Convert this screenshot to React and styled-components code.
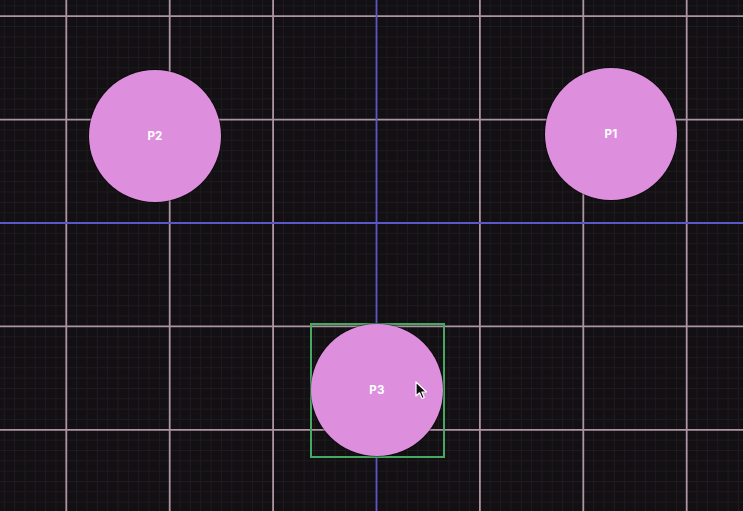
import React from "react";
import styled, { createGlobalStyle } from "styled-components";

const GlobalStyle = createGlobalStyle`
  html, body {
    margin: 0;
    padding: 0;
    background: #121012;
    overflow: hidden;
  }
  body {
    font-family: Inter, "Liberation Sans", sans-serif;
  }
`;

// canvas geometry
const ORIGIN_X = 376.5;
const ORIGIN_Y = 223;
const STEP = 103.4;
const RADIUS = 66;

const Canvas = styled.div`
  position: relative;
  width: 743px;
  height: 511px;
  overflow: hidden;
  background: #121012;
`;

const GridLayer = styled.svg`
  position: absolute;
  inset: 0;
`;

const Node = styled.div`
  position: absolute;
  left: ${(p) => p.$x - RADIUS}px;
  top: ${(p) => p.$y - RADIUS}px;
  width: ${RADIUS * 2}px;
  height: ${RADIUS * 2}px;
  border-radius: 50%;
  background: #dd8fde;
  display: flex;
  align-items: center;
  justify-content: center;
  color: #fff;
  font-size: 11.5px;
  font-weight: 700;
  letter-spacing: 0.2px;
  box-shadow: 0 0 0 1px rgba(0, 0, 0, 0.35);
`;

const Selection = styled.div`
  position: absolute;
  left: ${(p) => p.$x - RADIUS - 1.5}px;
  top: ${(p) => p.$y - RADIUS - 1.5}px;
  width: ${RADIUS * 2 + 3}px;
  height: ${RADIUS * 2 + 3}px;
  border: 2px solid #47a862;
  box-sizing: border-box;
`;

const Cursor = styled.svg`
  position: absolute;
  left: 415px;
  top: 381px;
  width: 13px;
  height: 19px;
`;

const nodes = [
  { id: "P2", x: 155, y: 136 },
  { id: "P1", x: 611, y: 134 },
  { id: "P3", x: 377, y: 390, selected: true },
];

function Grid() {
  const minor = [];
  const major = [];
  const minorStep = STEP / 10;
  for (let i = -40; i <= 40; i++) {
    const x = ORIGIN_X + i * minorStep;
    if (x < -1 || x > 744) continue;
    if (i % 10 === 0) major.push({ type: "v", pos: x, axis: i === 0 });
    else minor.push({ type: "v", pos: x });
  }
  for (let i = -30; i <= 30; i++) {
    const y = ORIGIN_Y + i * minorStep;
    if (y < -1 || y > 512) continue;
    if (i % 10 === 0) major.push({ type: "h", pos: y, axis: i === 0 });
    else minor.push({ type: "h", pos: y });
  }
  const line = (l, stroke, w, k) =>
    l.type === "v" ? (
      <line key={k} x1={l.pos} x2={l.pos} y1={0} y2={511} stroke={stroke} strokeWidth={w} />
    ) : (
      <line key={k} x1={0} x2={743} y1={l.pos} y2={l.pos} stroke={stroke} strokeWidth={w} />
    );
  return (
    <GridLayer width="743" height="511" viewBox="0 0 743 511">
      {minor.map((l, i) => line(l, "#201b20", 1, "m" + i))}
      {major
        .filter((l) => !l.axis)
        .map((l, i) => line(l, "#ad94a4", 1.8, "M" + i))}
      {major
        .filter((l) => l.axis)
        .map((l, i) => line(l, "#5b57c9", 1.8, "A" + i))}
    </GridLayer>
  );
}

export default function App() {
  return (
    <>
      <GlobalStyle />
      <Canvas>
        <Grid />
        {nodes.map((n) => (
          <React.Fragment key={n.id}>
            {n.selected && <Selection $x={n.x} $y={n.y} />}
            <Node $x={n.x} $y={n.y}>
              {n.id}
            </Node>
          </React.Fragment>
        ))}
        <Cursor viewBox="0 0 13 19">
          <path
            d="M1 1 L1 15 L4.5 11.8 L7 17.5 L9.3 16.5 L6.9 11 L11.5 11 Z"
            fill="#111"
            stroke="#fff"
            strokeWidth="1.2"
            strokeLinejoin="round"
          />
        </Cursor>
      </Canvas>
    </>
  );
}
